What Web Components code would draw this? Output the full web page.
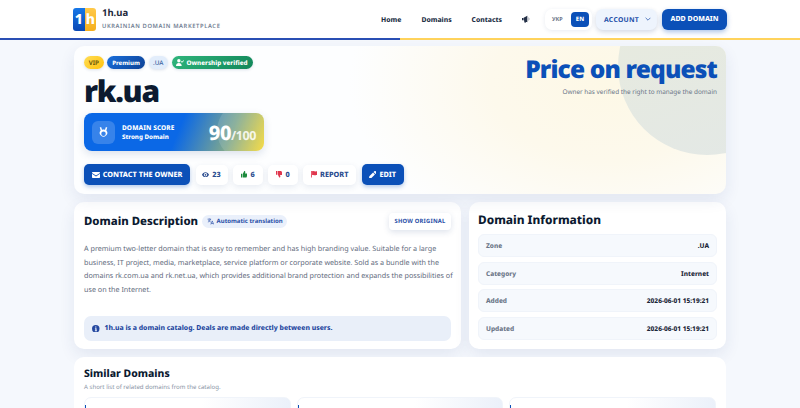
<!DOCTYPE html>
<html lang="en">
<head>
<meta charset="utf-8">
<title>rk.ua</title>
<style>
html { overflow: hidden; }
body {
  margin: 0;
  background: #f5f8fd;
  font-family: "Noto Sans", sans-serif;
  text-rendering: geometricPrecision;
  color: #0f172a;
}
</style>
</head>
<body>
<site-header></site-header>
<domain-page>
  <hero-card></hero-card>
  <description-card></description-card>
  <info-card></info-card>
  <similar-card></similar-card>
</domain-page>

<script>
const ICONS = {
  mail: '<svg viewBox="0 0 16 12" width="8" height="6"><path fill="currentColor" d="M1.500 0h13A1.500 1.500 0 0 1 16 1.500v.4L8 7 0 1.900v-.4A1.500 1.500 0 0 1 1.500 0zM0 3.700V10.500A1.500 1.500 0 0 0 1.500 12h13a1.500 1.500 0 0 0 1.500-1.500V3.700L8 8.800z"/></svg>',
  eye: '<svg viewBox="0 0 16 12" width="7" height="5.500"><path fill="currentColor" fill-rule="evenodd" d="M8 0c3.600 0 6.600 2.400 8 6-1.400 3.600-4.400 6-8 6S1.400 9.600 0 6c1.400-3.600 4.400-6 8-6zm0 2a4 4 0 1 0 0 8 4 4 0 0 0 0-8zm0 2a2 2 0 1 1 0 4 2 2 0 0 1 0-4z"/></svg>',
  up: '<svg viewBox="0 0 12 12" width="6.500" height="6.500"><path fill="currentColor" d="M0 5h2.500v7H0zM3.500 5L6 0c1.200 0 2 .8 2 2L7.500 4.500H11c.8 0 1.200.7 1 1.400L10.500 11c-.2.600-.7 1-1.300 1H3.500z"/></svg>',
  down: '<svg viewBox="0 0 12 12" width="6.500" height="6.500"><path fill="currentColor" d="M0 0h2.500v7H0zM3.500 7L6 12c1.200 0 2-.8 2-2l-.5-2.500H11c.8 0 1.200-.7 1-1.400L10.500 1c-.2-.6-.7-1-1.300-1H3.500z"/></svg>',
  flag: '<svg viewBox="0 0 12 12" width="6.500" height="6.500"><path fill="currentColor" d="M0 0h1.500v12H0zM2 .5c3-1 5 1 9.500 0v7c-4.500 1-6.500-1-9.500 0z"/></svg>',
  pen: '<svg viewBox="0 0 12 12" width="7.500" height="7.500"><path fill="currentColor" d="M8.500.5a1.600 1.600 0 0 1 2.300 0l.7.7a1.600 1.600 0 0 1 0 2.300L10.300 4.700 7.300 1.700zM6.500 2.500l3 3L3.500 11.500 0 12l.5-3.500z"/></svg>',
  user: '<svg viewBox="0 0 14 12" width="8" height="7"><path fill="currentColor" d="M5 0a3 3 0 1 1 0 6 3 3 0 0 1 0-6zM0 12c0-3 2-5 5-5s5 2 5 5zM9.500 3.500l1 1L13 2l1 1-3.500 3.500-2-2z"/></svg>'
};

function simpleElement(name, html) {
  const template = document.createElement('template');
  template.innerHTML = html;
  customElements.define(name, class extends HTMLElement {
    constructor() {
      super();
      this.attachShadow({ mode: 'open' });
      this.shadowRoot.appendChild(template.content.cloneNode(true));
    }
  });
}

simpleElement('site-header', `
<style>
:host {
  display: flex;
  align-items: center;
  height: 38px;
  padding: 0 73px;
  background: #fff;
  position: relative;
  border-bottom: 2px solid;
  border-image: linear-gradient(90deg, #2a4fb4 0 50%, #ffd35c 50% 100%) 1;
}
.logo { display: flex; width: 23px; height: 23px; border-radius: 3px; overflow: hidden; font-weight: 800; font-size: 14px; color: #fff; margin-top: 1px; }
.logo span { flex: 1; display: flex; align-items: center; justify-content: center; }
.logo .l { background: linear-gradient(180deg, #1677e8, #0a48b4); }
.logo .r { background: linear-gradient(180deg, #ffc94a, #f5ae1c); }
.brand { margin-left: 6px; margin-top: -2px; }
.name { font-size: 9.500px; font-weight: 700; line-height: 15px; color: #1e293b; }
.tag { font-size: 5.800px; font-weight: 600; letter-spacing: .6px; line-height: 9px; color: #737f94; margin-top: 2px; }
nav { margin-left: auto; display: flex; align-items: center; }
nav a { font-size: 6.800px; font-weight: 800; color: #243047; margin-right: 20px; }
.horn { color: #243047; margin: 0 15px 0 0; display: flex; }
.lang { display: flex; align-items: center; justify-content: space-between; width: 47px; height: 21px; padding: 0 3px 0 7px; box-sizing: border-box; border-radius: 7px; background: #fff; box-shadow: 0 1px 4px rgba(30,60,120,.1); font-size: 5.500px; font-weight: 700; color: #6b7688; margin-right: 4px; }
.lang b { background: #0b50b8; color: #fff; width: 18px; height: 15px; border-radius: 4px; display: flex; align-items: center; justify-content: center; font-weight: 800; font-size: 6px; }
.account { display: flex; align-items: center; gap: 6px; width: 61px; height: 21px; padding-left: 8px; box-sizing: border-box; border-radius: 7px; background: #eef4fd; box-shadow: 0 2px 5px rgba(30,60,120,.2); color: #1d4fa8; font-size: 6.800px; font-weight: 700; letter-spacing: .3px; margin-right: 5px; }
.add { height: 21px; width: 65px; display: flex; align-items: center; justify-content: center; border-radius: 6px; background: #0b50b8; box-shadow: 0 2px 5px rgba(11,80,184,.35); color: #fff; font-size: 7px; font-weight: 800; }
</style>
<div class="logo"><span class="l">1</span><span class="r">h</span></div>
<div class="brand">
  <div class="name">1h.ua</div>
  <div class="tag">UKRAINIAN DOMAIN MARKETPLACE</div>
</div>
<nav>
  <a>Home</a><a>Domains</a><a>Contacts</a>
  <span class="horn"><svg viewBox="0 0 12 11" width="8" height="8"><path fill="currentColor" d="M0 4h2v3.500H0zM2.500 3.500L8 .5v10L2.500 7.500zM3 8h2l.8 3H4zM9 3.500h1V4H9zM9 5.200h2.500v.6H9zM9 7.500h1V7H9z"/></svg></span>
  <div class="lang"><span>УКР</span><b>EN</b></div>
  <div class="account">ACCOUNT <svg viewBox="0 0 10 6" width="6" height="4"><path fill="none" stroke="currentColor" stroke-width="1.200" d="M1 1l4 4 4-4"/></svg></div>
  <div class="add">ADD DOMAIN</div>
</nav>
`);

simpleElement('domain-page', `
<style>
:host {
  display: grid;
  grid-template-columns: 387px 257px;
  gap: 8px;
  padding: 6px 74px 0;
}
::slotted(hero-card), ::slotted(similar-card) { grid-column: 1 / -1; }
</style>
<slot></slot>
`);

simpleElement('hero-card', `
<style>
:host {
  display: flex;
  height: 148px;
  box-sizing: border-box;
  padding: 10px 9px 10px 10px;
  border-radius: 10px;
  position: relative;
  overflow: hidden;
  background: radial-gradient(260px 170px at 82% 25%, #fdf8e6 0, #fdf9ec 45%, rgba(255,255,255,0) 100%), #fdfeff;
  box-shadow: 0 6px 16px rgba(30,60,120,.09);
}
.circle { position: absolute; left: 544px; top: -69px; width: 178px; height: 178px; border-radius: 50%; background: linear-gradient(160deg, #e8ebdd, #e3e8e6); }
.left, .right { position: relative; }
.left { flex: 1; }
.badges { display: flex; gap: 3.500px; align-items: center; height: 13px; }
.b { height: 12.500px; display: flex; align-items: center; gap: 2px; border-radius: 7px; font-size: 6.300px; font-weight: 800; box-sizing: border-box; justify-content: center; box-shadow: 0 1px 3px rgba(30,60,120,.15); }
.vip { background: linear-gradient(135deg, #ffdd55, #ffc20e); color: #5c4a05; width: 19.500px; font-weight: 600; }
.prem { background: linear-gradient(135deg, #1a6fdc, #0d4295); color: #fff; width: 38px; font-size: 6px; }
.zone { background: #e2edfb; color: #38639f; width: 19.500px; font-weight: 500; }
.ok { background: linear-gradient(135deg, #2fb57c, #12875a); color: #fff; width: 81px; }
h1 { margin: 0; font-size: 30px; line-height: 40px; font-weight: 900; color: #0c1a30; letter-spacing: -1.300px; margin-top: 2px; }
.score { display: flex; align-items: center; width: 180px; height: 38px; margin-top: 2px; box-sizing: border-box; padding: 0 8px; border-radius: 8px; color: #fff; position: relative; overflow: hidden; background: linear-gradient(112deg, #0b68e6 0, #0b68e6 52%, #7fa88e 80%, #f5d72e 100%); box-shadow: 0 3px 8px rgba(30,60,120,.15); }
.score::before { content: ""; position: absolute; left: 133px; top: -12px; width: 60px; height: 60px; border-radius: 50%; background: rgba(255,255,255,.12); }
.medal { width: 23px; height: 23px; border-radius: 6px; background: rgba(255,255,255,.18); display: flex; align-items: center; justify-content: center; }
.st { margin-left: 7px; font-size: 6.500px; font-weight: 800; line-height: 9.500px; letter-spacing: .1px; }
.st div + div { font-size: 6.200px; letter-spacing: 0; }
.num { margin-left: auto; font-size: 20px; font-weight: 800; position: relative; letter-spacing: -.5px; }
.num small { font-size: 12.500px; opacity: .85; font-weight: 700; letter-spacing: -.4px; }
.actions { display: flex; gap: 5.500px; align-items: center; margin-top: 13px; }
.btn { height: 20px; display: flex; align-items: center; justify-content: center; gap: 3px; border-radius: 5px; font-size: 7.300px; font-weight: 800; box-sizing: border-box; }
.solid { background: #0b50b8; color: #fff; height: 21px; box-shadow: 0 2px 4px rgba(11,80,184,.3); }
.plain { background: #fff; color: #2a4c8f; box-shadow: 0 2px 6px rgba(30,60,120,.1); }
.right { text-align: right; }
.price { font-size: 24.500px; line-height: 27px; font-weight: 900; color: #0b50b8; letter-spacing: -.85px; }
.sub { font-size: 6.400px; color: #6b7688; margin-top: 4px; }
</style>
<div class="circle"></div>
<div class="left">
  <div class="badges">
    <span class="b vip">VIP</span>
    <span class="b prem">Premium</span>
    <span class="b zone">.UA</span>
    <span class="b ok">${ICONS.user}Ownership verified</span>
  </div>
  <h1>rk.ua</h1>
  <div class="score">
    <div class="medal"><svg viewBox="0 0 12 14" width="9" height="11"><path fill="#fff" fill-rule="evenodd" d="M1 0h2l1 3.300A4.600 4.600 0 0 1 6 3a4.600 4.600 0 0 1 2 .3L9 0h2L9.800 4.200A5 5 0 1 1 2.200 4.200zM6 5.500a3 3 0 1 0 0 6 3 3 0 0 0 0-6z"/></svg></div>
    <div class="st"><div>DOMAIN SCORE</div><div>Strong Domain</div></div>
    <div class="num">90<small>/100</small></div>
  </div>
  <div class="actions">
    <div class="btn solid" style="width:106px">${ICONS.mail}CONTACT THE OWNER</div>
    <div class="btn plain" style="width:32px"><span style="display:flex">${ICONS.eye}</span>23</div>
    <div class="btn plain" style="width:29.500px"><span style="display:flex;color:#1c8a3c">${ICONS.up}</span>6</div>
    <div class="btn plain" style="width:29.500px"><span style="display:flex;color:#e0364d">${ICONS.down}</span>0</div>
    <div class="btn plain" style="width:53px"><span style="display:flex;color:#e0364d">${ICONS.flag}</span>REPORT</div>
    <div class="btn solid" style="width:42px">${ICONS.pen}EDIT</div>
  </div>
</div>
<div class="right">
  <div class="price">Price on request</div>
  <div class="sub">Owner has verified the right to manage the domain</div>
</div>
`);

simpleElement('description-card', `
<style>
:host {
  display: block;
  height: 147px;
  box-sizing: border-box;
  padding: 10px;
  border-radius: 10px;
  background: #fff;
  box-shadow: 0 6px 16px rgba(30,60,120,.09);
}
.head { display: flex; align-items: center; height: 18px; }
h2 { margin: 0; font-size: 11.400px; font-weight: 800; color: #0c1a30; }
.auto { display: flex; align-items: center; gap: 3px; margin-left: 4px; height: 13px; width: 85px; justify-content: center; border-radius: 7px; background: #eaf0fb; color: #2b50a8; font-size: 6px; font-weight: 700; }
.show { margin-left: auto; width: 62px; height: 17px; display: flex; align-items: center; justify-content: center; border-radius: 4px; background: #fff; box-shadow: 0 2px 6px rgba(30,60,120,.15); color: #2b50a8; font-size: 5.800px; font-weight: 700; letter-spacing: .2px; }
p { margin: 13px -5px 0 0; font-size: 7.200px; line-height: 13.500px; color: #5f6b7d; }
.note { display: flex; align-items: center; gap: 5px; margin-top: 19px; height: 25px; padding: 0 8px; box-sizing: border-box; border-radius: 7px; background: #e9eff9; color: #2548a0; font-size: 6.850px; font-weight: 800; }
</style>
<div class="head">
  <h2>Domain Description</h2>
  <span class="auto"><svg viewBox="0 0 12 12" width="7" height="7"><path fill="none" stroke="currentColor" stroke-width="1.100" d="M1 2h6M4 1v1M6 2c-.5 2-2 4-4.500 5M2.500 3.500C3.500 5.500 5 6.500 6.500 7M6.500 11l2.500-6 2.500 6M7.300 9.500h3.400"/></svg>Automatic translation</span>
  <span class="show">SHOW ORIGINAL</span>
</div>
<p>A premium two-letter domain that is easy to remember and has high branding value. Suitable for a large business, IT project, media, marketplace, service platform or corporate website. Sold as a bundle with the domains rk.com.ua and rk.net.ua, which provides additional brand protection and expands the possibilities of use on the Internet.</p>
<div class="note"><svg viewBox="0 0 12 12" width="7.500" height="7.500"><circle cx="6" cy="6" r="6" fill="#2548a0"/><path fill="#e9eff9" d="M5 2.300h2v1.700H5zM4.700 5h2.600v3.700h.7V10H4.500V8.700h.8V6.300h-.6z"/></svg>1h.ua is a domain catalog. Deals are made directly between users.</div>
`);

simpleElement('info-row', `
<style>
:host {
  display: flex;
  align-items: center;
  justify-content: space-between;
  height: 23px;
  padding: 0 7px;
  border-radius: 6px;
  background: #f6f9fd;
  border: 1px solid #f0f4fa;
  box-sizing: border-box;
  font-size: 6.500px;
  font-weight: 800;
}
.k { color: #6b7688; }
.v { color: #1c2738; }
</style>
<span class="k"><slot name="k"></slot></span><span class="v"><slot name="v"></slot></span>
`);

simpleElement('info-card', `
<style>
:host {
  display: block;
  height: 147px;
  box-sizing: border-box;
  padding: 9px;
  border-radius: 10px;
  background: #fff;
  box-shadow: 0 6px 16px rgba(30,60,120,.09);
}
h2 { margin: 0 0 5px; font-size: 11.850px; line-height: 18px; font-weight: 800; color: #0c1a30; }
.rows { display: flex; flex-direction: column; gap: 4.500px; }
</style>
<h2>Domain Information</h2>
<div class="rows"><slot></slot></div>
`);

simpleElement('similar-card', `
<style>
:host {
  display: block;
  height: 100px;
  box-sizing: border-box;
  padding: 10px 10px 0;
  border-radius: 10px 10px 0 0;
  background: #fff;
}
h3 { margin: 0; font-size: 10.400px; line-height: 14px; font-weight: 800; color: #0c1a30; }
.sub { font-size: 6.100px; color: #8a94a5; margin-top: 1px; }
.grid { display: grid; grid-template-columns: repeat(3, 1fr); gap: 6px; margin-top: 6px; }
.cell { height: 50px; border-radius: 7px; background: linear-gradient(100deg, #fff 55%, #e9eff9); border: 1px solid #f0f4fa; position: relative; }
.cell::before { content: ""; position: absolute; left: 0; top: 7px; width: 1px; height: 3px; background: #0b50b8; }
</style>
<h3>Similar Domains</h3>
<div class="sub">A short list of related domains from the catalog.</div>
<div class="grid"><div class="cell"></div><div class="cell"></div><div class="cell"></div></div>
`);

// the info rows are passed in through the card's slot
const rows = [['Zone', '.UA'], ['Category', 'Internet'], ['Added', '2026-06-01 15:19:21'], ['Updated', '2026-06-01 15:19:21']];
const infoCard = document.querySelector('info-card');
for (const [k, v] of rows) {
  const row = document.createElement('info-row');
  row.innerHTML = `<span slot="k">${k}</span><span slot="v">${v}</span>`;
  infoCard.appendChild(row);
}
</script>
</body>
</html>
